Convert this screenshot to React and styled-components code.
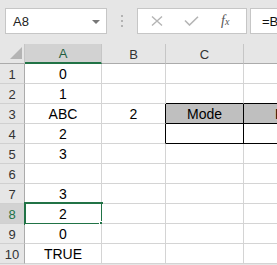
import React from "react";
import styled, { createGlobalStyle } from "styled-components";

const Global = createGlobalStyle`
  html, body { margin: 0; padding: 0; background: #e6e6e6; }
  body { font-family: "Liberation Sans", Arial, sans-serif; overflow: hidden; }
  * { box-sizing: border-box; }
`;

const Page = styled.div`
  width: 277px;
  height: 265px;
  overflow: hidden;
  background: #e6e6e6;
`;

const FormulaBar = styled.div`
  height: 44px;
  display: flex;
  align-items: flex-start;
  padding: 8px 0 0 5px;
`;

const NameBox = styled.div`
  width: 102px;
  height: 26px;
  background: #fff;
  border: 1px solid #c6c6c6;
  display: flex;
  align-items: center;
  justify-content: space-between;
  padding: 0 6px 0 7px;
  font-size: 13px;
  color: #222;
`;

const Caret = styled.span`
  width: 0;
  height: 0;
  border-left: 4px solid transparent;
  border-right: 4px solid transparent;
  border-top: 4px solid #777;
  margin-top: 1px;
`;

const Dots = styled.div`
  width: 2px;
  margin: 7px 14px 0 14px;
  display: flex;
  flex-direction: column;
  gap: 3px;
  span {
    width: 2px;
    height: 2px;
    background: #b3b3b3;
  }
`;

const FxBox = styled.div`
  width: 110px;
  height: 26px;
  background: #fff;
  border: 1px solid #c6c6c6;
  display: flex;
  align-items: center;
  padding-left: 13px;
  gap: 21px;
`;

const Fx = styled.span`
  font-family: "Liberation Serif", "Times New Roman", serif;
  font-style: italic;
  font-size: 14px;
  color: #555;
  margin-left: 1px;
  sub {
    font-size: 10px;
    vertical-align: 0;
  }
`;

const FormulaInput = styled.div`
  flex: 1;
  min-width: 0;
  height: 26px;
  margin-left: 3px;
  background: #fff;
  border: 1px solid #c6c6c6;
  border-right: none;
  display: flex;
  align-items: center;
  padding-left: 11px;
  font-size: 13px;
  color: #111;
  white-space: nowrap;
  overflow: hidden;
`;

const Grid = styled.div`
  display: grid;
  grid-template-columns: 25px 77px 64px 78px 100px;
  grid-auto-rows: 20px;
  background: #fff;
`;

const Corner = styled.div`
  background: #e6e6e6;
  border-right: 1px solid #c6c6c6;
  border-bottom: 1px solid #ababab;
  position: relative;
`;

const ColHead = styled.div`
  background: ${(p) => (p.$active ? "#d2d2d2" : "#e6e6e6")};
  border-right: 1px solid #c6c6c6;
  border-bottom: ${(p) => (p.$active ? "2px solid #217346" : "1px solid #ababab")};
  color: ${(p) => (p.$active ? "#1f5e3f" : "#333")};
  font-size: 13px;
  display: flex;
  justify-content: center;
  align-items: center;
  padding-top: 1px;
`;

const RowHead = styled.div`
  background: ${(p) => (p.$active ? "#d2d2d2" : "#e6e6e6")};
  border-right: 1px solid #ababab;
  border-bottom: 1px solid #d0d0d0;
  color: ${(p) => (p.$active ? "#217346" : "#333")};
  font-size: 13px;
  line-height: 17px;
  padding-top: 2px;
  text-align: center;
`;

const Cell = styled.div`
  position: relative;
  background: ${(p) => (p.$fill ? "#bfbfbf" : "#fff")};
  border-right: 1px solid ${(p) => (p.$br ? "#000" : "#d4d4d4")};
  border-bottom: 1px solid ${(p) => (p.$bb ? "#000" : "#d4d4d4")};
  font-size: 14px;
  line-height: 17px;
  padding-top: 2px;
  color: #000;
  text-align: ${(p) => p.$align || "center"};
  padding-left: ${(p) => (p.$indent ? `${p.$indent}px` : "0")};
  white-space: nowrap;
  overflow: hidden;
`;

const SelCell = styled(Cell)`
  overflow: visible;
`;

const Selection = styled.div`
  position: absolute;
  left: -1px;
  top: -2px;
  width: 79px;
  height: 23px;
  border: 2px solid #217346;
  pointer-events: none;
`;

const Handle = styled.div`
  position: absolute;
  right: -5px;
  bottom: -5px;
  width: 7px;
  height: 7px;
  background: #217346;
  border: 1px solid #fff;
`;

const CornerTriangle = () => (
  <svg
    width="25"
    height="20"
    viewBox="0 0 25 20"
    style={{ position: "absolute", left: 0, top: 0 }}
  >
    <polygon points="22,3 22,15 10,15" fill="#b4b4b4" />
  </svg>
);

const CrossIcon = () => (
  <svg width="12" height="10" viewBox="0 0 12 10">
    <path d="M1 0.5 L11 9.5 M11 0.5 L1 9.5" stroke="#b5b5b5" strokeWidth="1.4" fill="none" />
  </svg>
);

const CheckIcon = () => (
  <svg width="15" height="10" viewBox="0 0 15 10">
    <path d="M1 4.5 L5.5 9 L14 0.7" stroke="#b5b5b5" strokeWidth="1.6" fill="none" />
  </svg>
);

const cols = ["A", "B", "C", "D"];

const data = {
  1: { A: "0" },
  2: { A: "1" },
  3: { A: "ABC", B: "2", C: "Mode", D: "Result" },
  4: { A: "2" },
  5: { A: "3" },
  6: {},
  7: { A: "3" },
  8: { A: "2" },
  9: { A: "0" },
  10: { A: "TRUE" },
};

// black table border around C3:D4
const cellStyle = (r, c) => {
  const s = {};
  const inTable = (r === 3 || r === 4) && (c === "C" || c === "D");
  if (inTable) {
    s.$br = true;
    s.$bb = true;
  }
  if (r === 2 && (c === "C" || c === "D")) s.$bb = true;
  if ((r === 3 || r === 4) && c === "B") s.$br = true;
  if (r === 3 && (c === "C" || c === "D")) s.$fill = true;
  if (r === 3 && c === "D") {
    s.$align = "left";
    s.$indent = 31;
  }
  return s;
};

export default function App() {
  const rows = Object.keys(data).map(Number);
  return (
    <Page>
      <Global />
      <FormulaBar>
        <NameBox>
          <span>A8</span>
          <Caret />
        </NameBox>
        <Dots>
          <span />
          <span />
          <span />
        </Dots>
        <FxBox>
          <CrossIcon />
          <CheckIcon />
          <Fx>
            f<sub>x</sub>
          </Fx>
        </FxBox>
        <FormulaInput>=B3</FormulaInput>
      </FormulaBar>
      <Grid>
        <Corner>
          <CornerTriangle />
        </Corner>
        {cols.map((c) => (
          <ColHead key={c} $active={c === "A"}>
            {c}
          </ColHead>
        ))}
        {rows.map((r) => (
          <React.Fragment key={r}>
            <RowHead $active={r === 8}>{r}</RowHead>
            {cols.map((c) =>
              r === 8 && c === "A" ? (
                <SelCell key={c}>
                  {data[r][c]}
                  <Selection>
                    <Handle />
                  </Selection>
                </SelCell>
              ) : (
                <Cell key={c} {...cellStyle(r, c)}>
                  {data[r][c] || ""}
                </Cell>
              )
            )}
          </React.Fragment>
        ))}
      </Grid>
    </Page>
  );
}
